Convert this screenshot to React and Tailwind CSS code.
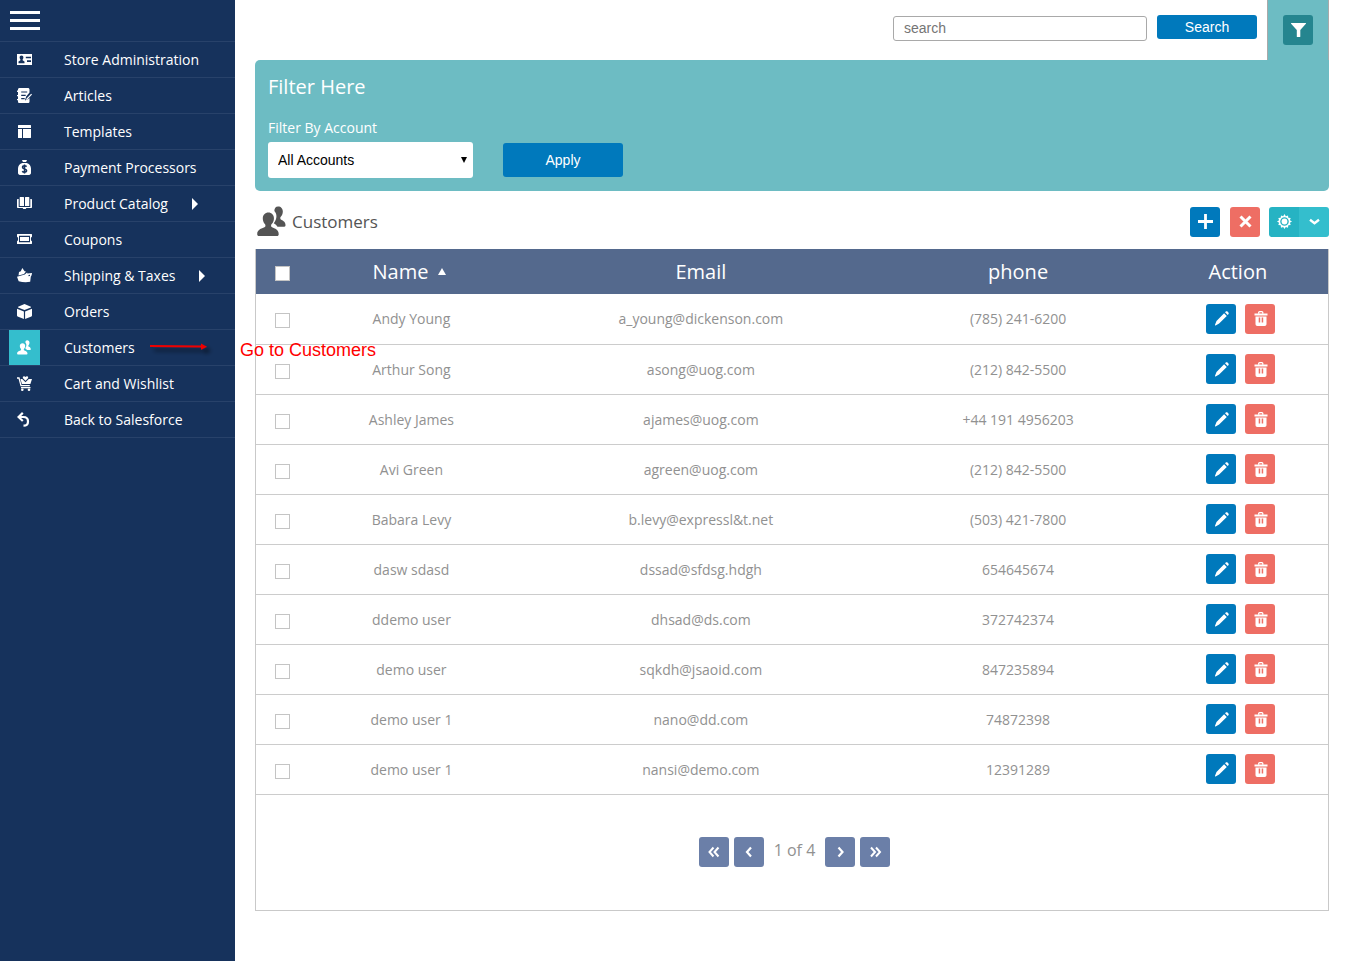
import clsx from "clsx";

const icons = {
  admin: (
    <path
      fillRule="evenodd"
      d="M0 2h15v11H0zM4.5 3.5c-1.2 0-1.900.9-1.900 2.100 0 .8.3 1.400.8 1.800v.9L1.500 9.500v1.700h6V9.500L5.600 8.300v-.9c.5-.4.8-1 .8-1.800 0-1.200-.7-2.100-1.900-2.100zM8.800 4.700v1.500H14V4.700zM10 8.300v1.600h4V8.300z"
    />
  ),
  articles: (
    <>
      <path d="M2.500 0h8.400c.9 0 1.600.7 1.600 1.600v3L9.200 8.400l-1.300 4 3.600-1.300 1-1v3.300c0 .9-.7 1.600-1.600 1.600H2.500C1.600 15 1 14.300 1 13.400v-1.100H0V11h1V8.200H0V6.900h1V3.900H0V2.600h1v-1C1 .7 1.600 0 2.500 0z" />
      <path d="M4.200 4h6M4.200 7.300h4.500M4.200 10.600h3.500" fill="none" stroke="#16325c" strokeWidth="1.200" />
      <path d="M14.200 5.800l.8.8-4.600 4.800-1.500.5.600-1.500z" />
    </>
  ),
  templates: (
    <path d="M1.500 1h12c.3 0 .5.200.5.500V4H1V1.500c0-.3.200-.5.500-.5zM1 5h4v9H1.500a.5.500 0 0 1-.5-.5zM6 5h8v8.500c0 .3-.2.500-.5.500H6z" />
  ),
  payment: (
    <>
      <path d="M5 0h5l-.9 2.100H5.900zM5.400 3h4.200C12.400 3.800 14 6 14 8.500v4.300c0 1.300-.8 2.200-2 2.200H3c-1.200 0-2-.9-2-2.200V8.500C1 6 2.600 3.800 5.400 3z" />
      <path
        d="M9.600 6.600c-.5-.5-1.200-.8-2.100-.8-1.200 0-2 .6-2 1.500 0 2.200 4.100 1.200 4.100 3.300 0 1-.8 1.600-2.100 1.600-1 0-1.800-.3-2.300-.9M7.500 4.500v9"
        fill="none"
        stroke="#16325c"
        strokeWidth="1.500"
      />
    </>
  ),
  catalog: (
    <path d="M3.100 1h3.300c.4 0 .6.200.6.600V10H2.700V1.500c0-.3.100-.5.400-.5zM8.600 1h3.300c.3 0 .4.200.4.500V10H8V1.600c0-.4.200-.6.600-.6zM0 3.700c0-.4.200-.7.600-.7h1.100v8h11.600V3h1.100c.4 0 .6.300.6.700v7.600c0 .4-.3.700-.7.700H9.200c0 .600-.5 1-1.200 1H7c-.7 0-1.200-.4-1.200-1H.7c-.4 0-.7-.3-.7-.7z" />
  ),
  coupons: (
    <path
      fillRule="evenodd"
      d="M.5 2h14c.3 0 .5.200.5.500v2.300c-.7.200-1.100.9-1.100 2.200s.4 2 1.100 2.200v2.300c0 .3-.2.500-.5.500H.5a.5.500 0 0 1-.5-.5V9.200C.7 9 1.100 8.300 1.100 7S.7 5 0 4.800V2.500C0 2.200.2 2 .5 2zM2 3.800v6.400h11V3.800zM3 4.900h9v4.200H3z"
    />
  ),
  shipping: (
    <path d="M5.300 0l2.300 3.300L9 3.600 7 6 1.500 7.500 2 4l1.800-.8zM0 8.800l7.800-2.200 2.300-2 .3.900 4.600-.6c-.1 1.600-.5 2.700-1.200 3.700l-.6 5.200c-4 .8-8 .4-11.500-.5zM11.500 7v1.300l1.400-.3.200-1.200z" />
  ),
  orders: (
    <path d="M7.500 0l6.400 2.700c.3.200.3.500 0 .7L7.500 6 1.100 3.400c-.3-.2-.3-.5 0-.7zM0 4.800l6.900 2.700V15L.6 12.400c-.4-.2-.6-.5-.6-.9zM15 4.800L8.100 7.500V15l6.300-2.600c.4-.2.600-.5.600-.9z" />
  ),
  customers: (
    <>
      <path d="M10.200.2c1.400 0 2.300 1 2.300 2.500 0 1-.4 1.900-1 2.500-.3.300-.3 1 0 1.300.6.400 2.300.8 2.300 2.700 0 .5-.2.800-.6.800H9.900c-.4-.7-1-1.300-1.800-1.700.9-1 1.300-2.100 1.300-3.300 0-1-.3-1.900-1-2.600C8.400 1.100 9 .2 10.200.2z" />
      <path d="M5.500 3.200c1.600 0 2.700 1.200 2.700 2.800 0 1-.4 2-1.100 2.700-.4.400-.4 1.200 0 1.500 1 .6 3.400 1 3.400 3.300 0 .7-.3 1-.8 1H1c-.6 0-.9-.3-.9-1 0-2.300 2.700-2.700 3.700-3.300.4-.3.400-1.100 0-1.500C3.200 8 2.800 7 2.800 6c0-1.600 1.100-2.800 2.700-2.800z" />
    </>
  ),
  cart: (
    <>
      <path d="M0 1.200h2.500l2 7.700h8.300V10.200H3.500L1.500 2.700H0zM3.500 2.900h1.700l3.300 3.300 3.300-3.300H15l-1.600 5.200H4.900z" />
      <path d="M8.500 4.700L6 2.200C5.500 1.200 6 .3 7 .3c.7 0 1.200.3 1.500.8.300-.5.800-.8 1.500-.8 1 0 1.500.9 1 1.900z" />
      <path d="M4 11h9.500v1.300H4z" />
      <circle cx="5.300" cy="13.700" r="1.300" />
      <circle cx="12" cy="13.700" r="1.300" />
    </>
  ),
  back: (
    <path
      d="M5.800.9L1.500 5l4.300 4M2 5h4.300c3 0 4.700 1.900 4.700 4.400s-1.700 4.300-4.500 4.300"
      fill="none"
      stroke="currentColor"
      strokeWidth="2.200"
    />
  ),
  plus: <path d="M6.100 0h2.800v6.100H15v2.800H8.900V15H6.100V8.900H0V6.100h6.100z" />,
  close: (
    <path d="M2.500 2.500l10 10M12.500 2.500l-10 10" fill="none" stroke="currentColor" strokeWidth="3" />
  ),
  gear: (
    <>
      <path
        fillRule="evenodd"
        d="M7.500 0l1.300 2.200 2.200-.8.300 2.400 2.400.3-.8 2.100L15 7.500l-2.100 1.300.8 2.200-2.400.3-.3 2.400-2.200-.8L7.500 15l-1.300-2.100-2.200.8-.3-2.400-2.400-.3.800-2.200L0 7.500l2.100-1.300-.8-2.100 2.400-.3.300-2.400 2.200.8zM7.500 3.200a4.300 4.300 0 1 0 0 8.600 4.300 4.300 0 0 0 0-8.600z"
      />
      <circle cx="7.500" cy="7.500" r="2.900" />
    </>
  ),
  pencil: (
    <path d="M10.100 2.200l2.700 2.700-7.700 7.700-3.500 1.800c-.4.200-.8-.1-.6-.6l1.500-3.900zM11 1.300l.8-.7c.6-.5 1.200-.5 1.700 0l.9.9c.5.500.5 1.100 0 1.700l-.7.800z" />
  ),
  trash: (
    <>
      <path
        d="M5.700 2.700V1.600C5.700 1 6 .7 6.600.7h2.300c.6 0 .9.3.9.9v1.100"
        fill="none"
        stroke="currentColor"
        strokeWidth="1.300"
      />
      <path
        fillRule="evenodd"
        d="M1.500 2.500h13v2h-13zM2.500 5.500h11V13c0 1.200-.7 2-1.900 2H4.400c-1.200 0-1.900-.8-1.900-2zM5.700 6.500v5h1.500v-5zM8.700 6.500v5h1.500v-5z"
      />
    </>
  ),
  funnel: (
    <path d="M.4 0h14.200c.4 0 .5.400.3.700L9.300 7v6.400c0 .400-.2.600-.6.600H6.400c-.4 0-.6-.2-.6-.6V7L.1.700C-.1.400 0 0 .4 0z" />
  ),
  down: <path d="M3 5.800l4.500 3.400L12 5.800" fill="none" stroke="currentColor" strokeWidth="2.400" />,
  prev: <path d="M10 3.500L6 8l4 4.500" fill="none" stroke="currentColor" strokeWidth="2.200" />,
  next: <path d="M5.500 3.500l4 4.500-4 4.500" fill="none" stroke="currentColor" strokeWidth="2.200" />,
  first: (
    <path d="M7.500 3.500L3.500 8l4 4.500M12.500 3.500L8.500 8l4 4.500" fill="none" stroke="currentColor" strokeWidth="2" />
  ),
  last: (
    <path d="M3 3.500L7 8l-4 4.500M8 3.500L12 8l-4 4.500" fill="none" stroke="currentColor" strokeWidth="2" />
  ),
};

function Icon({ name, className = "size-[15px]" }) {
  return (
    <svg viewBox="0 0 15 15" fill="currentColor" className={clsx("shrink-0", className)} aria-hidden="true">
      {icons[name]}
    </svg>
  );
}

const menu = [
  { label: "Store Administration", icon: "admin" },
  { label: "Articles", icon: "articles" },
  { label: "Templates", icon: "templates" },
  { label: "Payment Processors", icon: "payment" },
  { label: "Product Catalog", icon: "catalog", hasSub: true },
  { label: "Coupons", icon: "coupons" },
  { label: "Shipping & Taxes", icon: "shipping", hasSub: true },
  { label: "Orders", icon: "orders" },
  { label: "Customers", icon: "customers", active: true },
  { label: "Cart and Wishlist", icon: "cart" },
  { label: "Back to Salesforce", icon: "back" },
];

const customers = [
  { name: "Andy Young", email: "a_young@dickenson.com", phone: "(785) 241-6200" },
  { name: "Arthur Song", email: "asong@uog.com", phone: "(212) 842-5500" },
  { name: "Ashley James", email: "ajames@uog.com", phone: "+44 191 4956203" },
  { name: "Avi Green", email: "agreen@uog.com", phone: "(212) 842-5500" },
  { name: "Babara Levy", email: "b.levy@expressl&t.net", phone: "(503) 421-7800" },
  { name: "dasw sdasd", email: "dssad@sfdsg.hdgh", phone: "654645674" },
  { name: "ddemo user", email: "dhsad@ds.com", phone: "372742374" },
  { name: "demo user", email: "sqkdh@jsaoid.com", phone: "847235894" },
  { name: "demo user 1", email: "nano@dd.com", phone: "74872398" },
  { name: "demo user 1", email: "nansi@demo.com", phone: "12391289" },
];

function IconButton({ icon, label, className }) {
  return (
    <button
      type="button"
      aria-label={label}
      className={clsx("flex size-[30px] items-center justify-center text-white", className)}
    >
      <Icon name={icon} />
    </button>
  );
}

function Checkbox({ label }) {
  return (
    <input
      type="checkbox"
      aria-label={label}
      className="block mx-auto mt-[3px] size-[15px] appearance-none border border-[#c4c4c4] bg-white checked:bg-[#0079bc]"
    />
  );
}

function GoToCustomers() {
  return (
    <>
      <svg viewBox="0 0 70 20" className="absolute left-[148px] top-2 h-5 w-[70px]" aria-hidden="true">
        <defs>
          <filter id="arrow-shadow" x="-10%" y="-100%" width="130%" height="300%">
            <feDropShadow dx="4" dy="4" stdDeviation="2" floodColor="#000" floodOpacity="0.6" />
          </filter>
        </defs>
        <g filter="url(#arrow-shadow)">
          <path d="M2 8l52 .6" stroke="#f00000" strokeWidth="2" />
          <path d="M53 5.500l6 3.300-6 3z" fill="#f00000" />
        </g>
      </svg>
      <span className="absolute left-[240px] top-2 z-10 whitespace-nowrap font-['Liberation_Sans',sans-serif] text-[18px] leading-6 text-[#ff0000]">
        Go to Customers
      </span>
    </>
  );
}

function Sidebar() {
  return (
    <nav className="w-[235px] shrink-0 bg-[#16325c] text-white">
      <div className="h-[42px] border-b border-[#28426a] pl-[10px] pt-[11px]">
        <button type="button" aria-label="Toggle menu" className="flex w-[30px] flex-col gap-[5px]">
          <span className="h-[3px] w-full bg-white" />
          <span className="h-[3px] w-full bg-white" />
          <span className="h-[3px] w-full bg-white" />
        </button>
      </div>
      <ul>
        {menu.map((item) => (
          <li key={item.label} className="relative h-9 border-b border-[#28426a]">
            <a href="#" className="flex h-full items-center pl-[9px]">
              <span
                className={clsx(
                  "flex h-full w-[31px] items-center justify-center",
                  item.active && "bg-[#34becd]"
                )}
              >
                <Icon name={item.icon} />
              </span>
              <span className="ml-6">{item.label}</span>
              {item.hasSub && (
                <svg viewBox="0 0 6 12" fill="currentColor" className="ml-6 h-3 w-[6px]" aria-hidden="true">
                  <path d="M0 0l6 6-6 6z" />
                </svg>
              )}
            </a>
            {item.active && <GoToCustomers />}
          </li>
        ))}
      </ul>
    </nav>
  );
}

function TopBar() {
  return (
    <header className="flex h-[60px] justify-end font-['Liberation_Sans',sans-serif]">
      <form className="flex items-start gap-[10px] pr-[10px] pt-[15px]" onSubmit={(e) => e.preventDefault()}>
        <input
          type="text"
          aria-label="search"
          placeholder="search"
          className="mt-px h-[25px] w-[254px] rounded-[3px] border border-[#a9a9a9] px-[10px] pb-[2px] text-[14px] placeholder:text-[#757575]"
        />
        <button type="submit" className="h-6 w-[100px] rounded-[3px] bg-[#0079bc] text-[14px] text-white">
          Search
        </button>
      </form>
      <div className="w-[62px] border-x border-[#a9a9a9] bg-[#6dbcc3] pl-[15px] pt-[15px]">
        <IconButton icon="funnel" label="Filter" className="rounded-[3px] bg-[#25858f]" />
      </div>
    </header>
  );
}

function FilterPanel() {
  return (
    <section className="rounded-b-[5px] rounded-tl-[5px] bg-[#6dbcc3] px-[13px] pb-[13px] pt-3 text-white">
      <h2 className="text-[20px] leading-[30px]">Filter Here</h2>
      <label htmlFor="account" className="mt-4 block leading-5">
        Filter By Account
      </label>
      <div className="mt-1 flex items-center gap-[30px] font-['Liberation_Sans',sans-serif]">
        <div className="relative">
          <select
            id="account"
            className="block h-9 w-[205px] appearance-none rounded-[3px] bg-white px-[10px] text-[14px] text-black"
          >
            <option>All Accounts</option>
          </select>
          <svg
            viewBox="0 0 6 6"
            className="pointer-events-none absolute right-[6px] top-[15px] size-[6px]"
            aria-hidden="true"
          >
            <path d="M0 0h6L3 6z" fill="#000" />
          </svg>
        </div>
        <button type="button" className="h-[34px] w-[120px] rounded-[3px] bg-[#0079bc] text-[14px]">
          Apply
        </button>
      </div>
    </section>
  );
}

function CustomersTable() {
  return (
    <table className="w-full table-fixed border-collapse text-center text-[#919191]">
      <colgroup>
        <col className="w-[5%]" />
        <col className="w-[19%]" />
        <col className="w-[35%]" />
        <col className="w-[24%]" />
        <col className="w-[17%]" />
      </colgroup>
      <thead className="bg-[#54698d] text-[20px] text-white">
        <tr className="h-[45px] font-normal">
          <th className="p-0">
            <Checkbox label="Select all customers" />
          </th>
          <th className="p-0 font-normal">
            <span className="inline-flex items-center gap-[10px] pr-1">
              Name
              <svg viewBox="0 0 8 7" fill="currentColor" className="h-[7px] w-2" aria-hidden="true">
                <path d="M4 0l4 7H0z" />
              </svg>
            </span>
          </th>
          <th className="p-0 font-normal">Email</th>
          <th className="p-0 pl-[2px] font-normal">phone</th>
          <th className="p-0 pl-[2px] font-normal">Action</th>
        </tr>
      </thead>
      <tbody>
        {customers.map((customer, i) => (
          <tr key={i} className="h-[50px] border-b border-[#cccccc]">
            <td className="p-0 pt-px">
              <Checkbox label={`Select ${customer.name}`} />
            </td>
            <td className="p-0 pt-px">{customer.name}</td>
            <td className="p-0 pt-px">{customer.email}</td>
            <td className="p-0 pl-[2px] pt-px">{customer.phone}</td>
            <td className="p-0">
              <div className="flex justify-center gap-[9px] pl-2">
                <IconButton icon="pencil" label={`Edit ${customer.name}`} className="rounded-[3px] bg-[#0079bc]" />
                <IconButton icon="trash" label={`Delete ${customer.name}`} className="rounded-[3px] bg-[#ee6e64]" />
              </div>
            </td>
          </tr>
        ))}
      </tbody>
    </table>
  );
}

function Pager() {
  return (
    <div className="flex items-start justify-center gap-[5px] pb-[43px] pl-[5px] pt-[42px]">
      <IconButton icon="first" label="First page" className="rounded-[3px] bg-[#6b7fa8]" />
      <IconButton icon="prev" label="Previous page" className="rounded-[3px] bg-[#6b7fa8]" />
      <span className="px-[5px] text-[16px] leading-[26px] text-[#919191]">1 of 4</span>
      <IconButton icon="next" label="Next page" className="rounded-[3px] bg-[#6b7fa8]" />
      <IconButton icon="last" label="Last page" className="rounded-[3px] bg-[#6b7fa8]" />
    </div>
  );
}

export default function App() {
  return (
    <div className="flex min-h-screen bg-white font-['Open_Sans',sans-serif] text-[14px] leading-5">
      <Sidebar />
      <main className="min-w-0 flex-1 px-5 pb-5">
        <TopBar />
        <FilterPanel />
        <div className="flex items-center justify-between pb-3 pt-[15px]">
          <h1 className="flex items-center pl-[2px] text-[17px] text-[#545454]">
            <Icon name="customers" className="size-[31px]" />
            <span className="ml-1">Customers</span>
          </h1>
          <div className="flex">
            <IconButton icon="plus" label="Add customer" className="rounded-[3px] bg-[#0079bc]" />
            <IconButton icon="close" label="Delete selected" className="ml-[10px] rounded-[3px] bg-[#ee6e64]" />
            <IconButton icon="gear" label="Settings" className="ml-[9px] rounded-l-[3px] bg-[#26b3c3]" />
            <IconButton icon="down" label="More settings" className="rounded-r-[3px] bg-[#34becd]" />
          </div>
        </div>
        <section className="border-x border-b border-[#c9c9c9]">
          <CustomersTable />
          <Pager />
        </section>
      </main>
    </div>
  );
}
